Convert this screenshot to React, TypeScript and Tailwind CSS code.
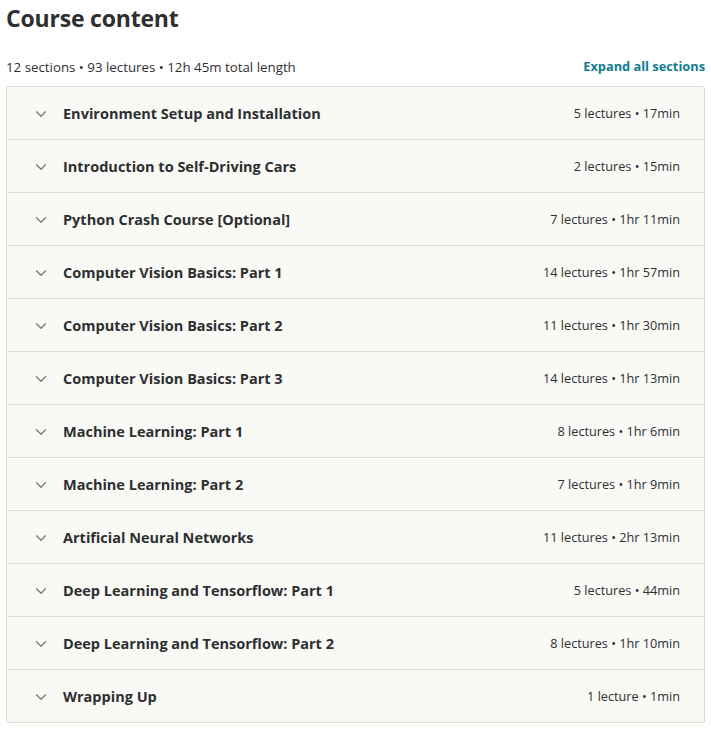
import { ChevronDown } from "lucide-react";

const SECTIONS = [
	{ title: "Environment Setup and Installation", meta: "5 lectures • 17min" },
	{ title: "Introduction to Self-Driving Cars", meta: "2 lectures • 15min" },
	{ title: "Python Crash Course [Optional]", meta: "7 lectures • 1hr 11min" },
	{ title: "Computer Vision Basics: Part 1", meta: "14 lectures • 1hr 57min" },
	{ title: "Computer Vision Basics: Part 2", meta: "11 lectures • 1hr 30min" },
	{ title: "Computer Vision Basics: Part 3", meta: "14 lectures • 1hr 13min" },
	{ title: "Machine Learning: Part 1", meta: "8 lectures • 1hr 6min" },
	{ title: "Machine Learning: Part 2", meta: "7 lectures • 1hr 9min" },
	{ title: "Artificial Neural Networks", meta: "11 lectures • 2hr 13min" },
	{ title: "Deep Learning and Tensorflow: Part 1", meta: "5 lectures • 44min" },
	{ title: "Deep Learning and Tensorflow: Part 2", meta: "8 lectures • 1hr 10min" },
	{ title: "Wrapping Up", meta: "1 lecture • 1min" },
];

export default function App() {
	return (
		<div
			className="min-h-[730px] bg-white px-[6px] text-[#2d2f31]"
			style={{ fontFamily: '"Open Sans", "Noto Sans", sans-serif' }}
		>
			<h2 className="pt-[2px] text-[23px] font-bold leading-[32px] tracking-[-0.2px]">
				Course content
			</h2>
			<div className="mt-[23px] flex items-end justify-between pb-[10px]">
				<p className="text-[13.3px] leading-[18px] text-[#2d2f31]">
					12 sections • 93 lectures • 12h 45m total length
				</p>
				<button
					type="button"
					className="mb-[1px] text-[12.8px] font-bold leading-[18px] text-[#0f7c90]"
				>
					Expand all sections
				</button>
			</div>
			<div className="overflow-hidden rounded-[2px] border border-[#dddccf] bg-[#f9f9f6]">
				{SECTIONS.map((section, index) => (
					<div
						key={section.title}
						className={
							index === 0
								? "flex h-[52px] items-center justify-between pt-[2px] pr-[24px] pl-[25px]"
								: "flex h-[53px] items-center justify-between border-t border-[#dddccf] pt-[2px] pr-[24px] pl-[25px]"
						}
					>
						<div className="flex items-center">
							<ChevronDown className="h-[18px] w-[18px] text-[#73777a]" strokeWidth={1.6} />
							<span className="ml-[13px] text-[14.5px] font-bold text-[#2d2f31]">
								{section.title}
							</span>
						</div>
						<span className="text-[12.7px] text-[#2d2f31]">{section.meta}</span>
					</div>
				))}
			</div>
		</div>
	);
}
